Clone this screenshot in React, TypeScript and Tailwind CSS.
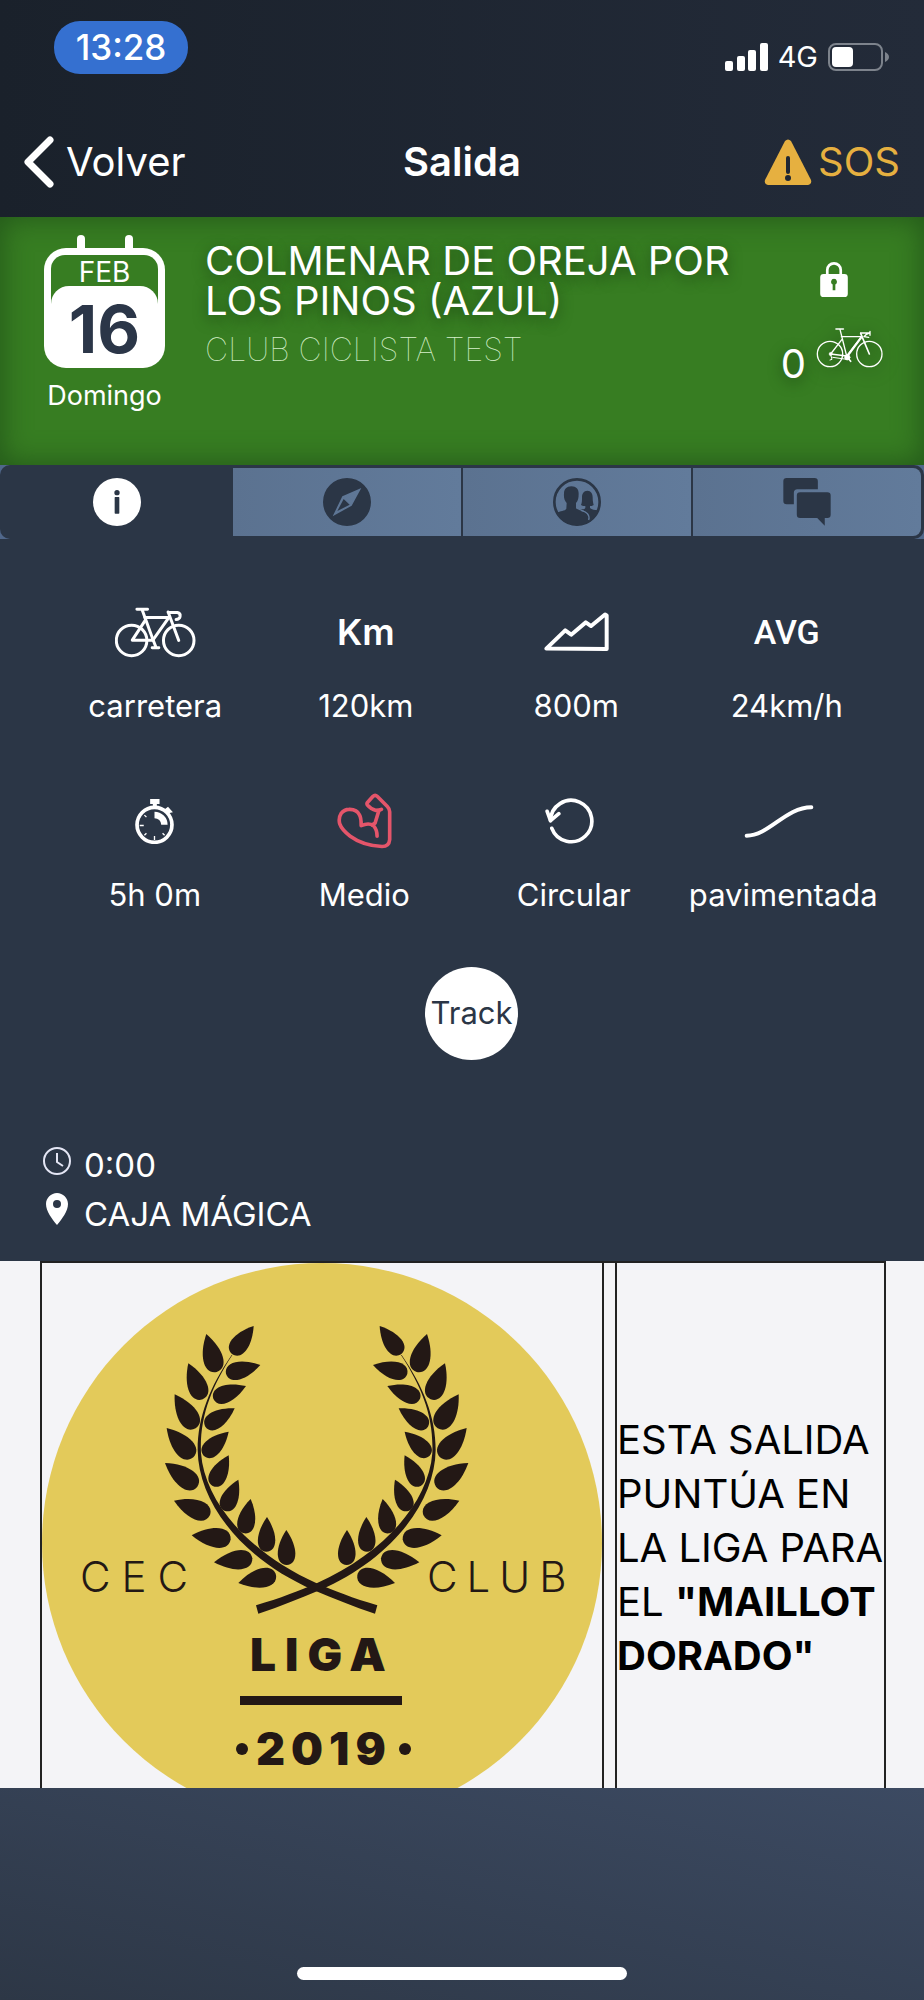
import React, { useState } from "react";

type IconProps = { className?: string };

const INK = "#231815";

// tip x, tip y, base x, base y of each leaf on the left branch
const LEAVES = [
  [671, 228, 606, 312],
  [529, 252, 560, 366],
  [691, 345, 588, 371],
  [475, 340, 518, 448],
  [648, 408, 550, 446],
  [434, 433, 497, 535],
  [614, 475, 526, 530],
  [410, 534, 490, 622],
  [596, 545, 521, 617],
  [405, 639, 502, 710],
  [596, 616, 548, 708],
  [432, 752, 540, 795],
  [625, 689, 583, 782],
  [485, 856, 602, 868],
  [662, 747, 642, 850],
  [552, 937, 667, 925],
  [711, 801, 709, 905],
  [625, 999, 738, 975],
  [769, 840, 770, 945],
];

function Branch() {
  return (
    <g>
      {LEAVES.map(([tx, ty, bx, by]) => {
        const length = Math.hypot(tx - bx, ty - by);
        const angle = (Math.atan2(ty - by, tx - bx) * 180) / Math.PI;
        return (
          <path
            key={`${tx}-${ty}`}
            d="M0 0C2 -33 50 -34 100 0C50 34 2 33 0 0Z"
            transform={`translate(${bx} ${by}) rotate(${angle}) scale(${length / 100})`}
          />
        );
      })}
      <path d="M605 315C540 410 503 500 503 600C505 760 640 930 850 1020C910 1045 970 1070 1035 1091L1042 1066C970 1045 910 1022 860 1000C660 910 525 760 513 610C508 500 545 410 607 315Z" />
    </g>
  );
}

function LeagueBadge() {
  return (
    <svg viewBox="0 0 560 525" className="block w-full" role="img" aria-label="CEC Club Liga 2019">
      <circle cx="280" cy="280" r="280" fill="#e3ca5a" />
      <g transform="translate(-12 -13) scale(0.33333)" fill={INK}>
        <Branch />
        <g transform="translate(1720 0) scale(-1 1)">
          <Branch />
        </g>
      </g>
      <rect x="198" y="433" width="162" height="9" fill={INK} />
      <g fill={INK} className="font-['Inter',sans-serif]">
        <text x="38" y="329" fontSize="42" fontWeight="300" className="tracking-[11px]">CEC</text>
        <text x="385" y="329" fontSize="42" fontWeight="300" className="tracking-[9px]">CLUB</text>
        <text x="208" y="408" fontSize="46" fontWeight="900" className="tracking-[9px]">LIGA</text>
        <text x="214" y="502" fontSize="45" fontWeight="900" className="tracking-[6px]">2019</text>
      </g>
      <circle cx="200" cy="486" r="6" fill={INK} />
      <circle cx="363" cy="486" r="6" fill={INK} />
    </svg>
  );
}

function InfoIcon({ className }: IconProps) {
  return (
    <svg viewBox="0 0 144 144" className={className}>
      <circle cx="72" cy="72" r="72" fill="#fff" />
      <circle cx="72" cy="44" r="8" fill="#2b3646" />
      <rect x="65" y="57" width="14" height="50" rx="2" fill="#2b3646" />
    </svg>
  );
}

function CompassIcon({ className }: IconProps) {
  return (
    <svg viewBox="0 0 144 144" className={className} fill="currentColor" fillRule="evenodd">
      <path d="M72 0A72 72 0 1 1 72 144A72 72 0 1 1 72 0ZM115 30L58 55L29 115L86 83ZM62 63L80 80L43 99Z" />
    </svg>
  );
}

function PeopleIcon({ className }: IconProps) {
  return (
    <svg viewBox="0 0 144 144" className={className}>
      <clipPath id="people-clip">
        <circle cx="72" cy="72" r="70" />
      </clipPath>
      <circle cx="72" cy="72" r="68" fill="none" stroke="currentColor" strokeWidth="8" />
      <g clipPath="url(#people-clip)" fill="currentColor">
        <path d="M55 25C70 25 77 34 77 47C77 60 75 68 69 75L69 91C74 96 86 98 96 103C106 109 110 118 108 128L100 144H20L10 104C22 99 36 99 40 92L41 75C34 67 32 58 33 46C33 34 41 25 55 25Z" />
        <path d="M103 38C114 38 119 47 119 58C119 68 120 75 122 81C118 84 114 84 111 84L111 90C116 95 126 96 134 97L126 128L106 140C113 122 109 108 94 99C89 96 84 95 82 94C88 94 96 94 97 90L97 84C92 84 88 84 84 81C87 75 87 68 87 58C87 47 92 38 103 38Z" />
      </g>
      <path d="M84 97C101 101 111 110 107 126" fill="none" stroke="#627b9b" strokeWidth="4" />
    </svg>
  );
}

function ChatIcon({ className }: IconProps) {
  return (
    <svg viewBox="0 0 144 146" className={className} fill="currentColor">
      <path d="M10 0H95Q105 0 105 10V34H43Q32 34 32 45V80H10Q0 80 0 70V10Q0 0 10 0Z" />
      <path d="M51 43H134Q144 43 144 53V112Q144 122 134 122H126V145L103 122H51Q41 122 41 112V53Q41 43 51 43Z" />
    </svg>
  );
}

function RoadBikeIcon({ className }: IconProps) {
  return (
    <svg viewBox="0 0 204 120" className={className} fill="none" stroke="currentColor" strokeLinecap="round" strokeLinejoin="round">
      <circle cx="42" cy="78" r="38" strokeWidth="4" />
      <circle cx="160" cy="78" r="38" strokeWidth="4" />
      <path d="M60 3H82" strokeWidth="5" />
      <path d="M72 4L92 84M76 26H136L92 84L44 78L78 34" strokeWidth="4" />
      <path d="M134 16L160 78" strokeWidth="5" />
      <path d="M136 28L96 82" strokeWidth="6" />
      <path d="M134 15H160Q150 18 144 26M162 10V22M144 26L158 28" strokeWidth="4" />
      <circle cx="44" cy="78" r="5" fill="currentColor" />
      <path d="M44 80L48 94L42 96M50 88L92 94" strokeWidth="3" />
      <circle cx="94" cy="88" r="8" fill="currentColor" strokeWidth="2" />
      <path d="M94 88L104 100" strokeWidth="5" />
    </svg>
  );
}

function BikeIcon({ className }: IconProps) {
  return (
    <svg viewBox="0 0 244 152" className={className} fill="none" stroke="currentColor" strokeWidth="9" strokeLinecap="round" strokeLinejoin="round">
      <circle cx="50" cy="100" r="46" />
      <circle cx="192" cy="100" r="46" />
      <path d="M66 6H98M82 8L114 96L124 122M112 122H132" />
      <path d="M90 31H162L114 99H52L92 38" />
      <path d="M160 14L192 100M160 16H188Q198 18 196 28Q194 36 184 37" />
    </svg>
  );
}

function SlopeIcon({ className }: IconProps) {
  return (
    <svg viewBox="0 0 196 120" className={className} fill="none" stroke="currentColor" strokeWidth="12" strokeLinejoin="round">
      <path d="M7 110L64 55L82 68L126 31L142 42L184 7L189 10V111Z" />
    </svg>
  );
}

function StopwatchIcon({ className }: IconProps) {
  return (
    <svg viewBox="0 0 116 134" className={className} fill="none" stroke="currentColor">
      <circle cx="58" cy="77" r="52" strokeWidth="11" />
      <path d="M45 0H73V15H65V24H53V15H45Z" fill="currentColor" stroke="none" />
      <path d="M90 32L100 40L109 38L98 26Z" fill="currentColor" strokeWidth="4" />
      <path d="M58 38A39 39 0 0 1 97 77H78A20 20 0 0 0 58 57Z" fill="currentColor" stroke="none" />
      <path d="M14 79H26M58 110V122M28 108L34 102M88 108L82 102M28 48L34 54" strokeWidth="4" />
    </svg>
  );
}

function MuscleIcon({ className }: IconProps) {
  return (
    <svg viewBox="0 0 166 168" className={className} fill="none" stroke="currentColor" strokeWidth="11" strokeLinecap="round" strokeLinejoin="round">
      <path d="M134 49Q128 52 118 52Q102 48 92 36Q89 32 92 28L108 10Q115 3 122 10L152 40Q159 47 159 56V140Q157 161 136 161Q78 158 40 130Q14 110 8 92Q4 74 12 62Q22 49 36 49Q60 48 68 66Q73 74 73 98Q96 88 110 98Q121 110 121 130" />
      <path d="M126 54L115 90Q110 94 106 96" />
    </svg>
  );
}

function CircularIcon({ className }: IconProps) {
  return (
    <svg viewBox="0 0 146 138" className={className} fill="none" stroke="currentColor" strokeWidth="11" strokeLinecap="round" strokeLinejoin="round">
      <path d="M20 91A62 62 0 1 0 16 68" />
      <path d="M6 40L16 68L41 47" />
    </svg>
  );
}

function RoadIcon({ className }: IconProps) {
  return (
    <svg viewBox="0 0 210 100" className={className} fill="none" stroke="currentColor" strokeWidth="12" strokeLinecap="round">
      <path d="M7 93C75 93 125 7 203 7" />
    </svg>
  );
}

function Stat({ icon, label }: { icon: React.ReactNode; label: string }) {
  return (
    <div className="flex flex-col items-center">
      <div className="flex h-[60px] items-center justify-center">{icon}</div>
      <p className="mt-6 text-[31px] leading-10">{label}</p>
    </div>
  );
}

const TABS = [
  { name: "Información", Icon: InfoIcon },
  { name: "Mapa", Icon: CompassIcon },
  { name: "Participantes", Icon: PeopleIcon },
  { name: "Chat", Icon: ChatIcon },
];

export default function App() {
  const [tab, setTab] = useState(0);

  return (
    <div className="flex min-h-screen flex-col bg-[#2b3646] font-['Inter',sans-serif] text-white">
      <header className="bg-linear-to-r from-[#1a212b] to-[#232b39]">
        <div className="flex items-start justify-between pt-[21px] pr-[35px] pl-[54px]">
          <span className="flex h-[53px] w-[134px] items-center justify-center rounded-[26px] bg-[#3570d0] text-[35px] font-medium">
            13:28
          </span>
          <div className="mt-4 flex items-center gap-[10px] text-[29px] leading-10">
            <svg viewBox="0 0 43 28" className="h-7 w-[43px]" fill="currentColor">
              <rect x="0" y="18" width="8" height="10" rx="2" />
              <rect x="12" y="13" width="8" height="15" rx="2" />
              <rect x="23" y="7" width="8" height="21" rx="2" />
              <rect x="35" y="0" width="8" height="28" rx="2" />
            </svg>
            <span>4G</span>
            <svg viewBox="0 0 61 28" className="h-7 w-[61px]">
              <rect x="1" y="1" width="53" height="26" rx="7" fill="none" stroke="#7d838c" strokeWidth="2" />
              <rect x="4" y="4" width="21" height="20" rx="4" fill="#fff" />
              <path d="M57 9Q61 11 61 14Q61 17 57 19Z" fill="#7d838c" />
            </svg>
          </div>
        </div>
        <nav className="grid h-[140px] grid-cols-[1fr_auto_1fr] items-center px-6 pt-[30px] text-[40px]">
          <a href="#volver" className="flex items-center gap-3">
            <svg viewBox="0 0 30 52" className="h-[52px] w-[30px]" fill="none" stroke="currentColor" strokeWidth="7" strokeLinecap="round" strokeLinejoin="round">
              <path d="M26 4L4 26L26 48" />
            </svg>
            Volver
          </a>
          <h1 className="font-semibold">Salida</h1>
          <button type="button" className="flex items-center gap-[6px] justify-self-end text-[#e6b040]">
            <svg viewBox="0 0 48 46" className="h-[46px] w-12">
              <path d="M21 2Q24 -1 27 2L47 41Q48 45 44 46H4Q0 45 1 41Z" fill="currentColor" />
              <path d="M24 19V33" stroke="#1f2733" strokeWidth="4" strokeLinecap="round" />
              <circle cx="24" cy="39" r="3" fill="#1f2733" />
            </svg>
            SOS
          </button>
        </nav>
      </header>

      <section className="flex h-[248px] bg-[#377d22] pr-10 pl-11 shadow-[inset_0_0_28px_2px_#24591a]">
        <div className="flex w-[121px] flex-col items-center pt-[18px]">
          <div className="flex w-full justify-center gap-10">
            <span className="h-[14px] w-2 rounded-t-full bg-white" />
            <span className="h-[14px] w-2 rounded-t-full bg-white" />
          </div>
          <div className="-mt-px h-[120px] w-full rounded-[22px] bg-white p-[7px]">
            <div className="rounded-t-[14px] bg-[#377d22] text-center">
              <p className="h-[31px] text-[28px] leading-[34px]">FEB</p>
              <p className="h-[75px] rounded-t-[18px] bg-white text-[66px] leading-[86px] font-bold text-[#2b3648]">16</p>
            </div>
          </div>
          <p className="mt-2 text-[27px] leading-10">Domingo</p>
        </div>
        <div className="ml-10 flex-1 pt-6">
          <h2 className="text-[40px] leading-10 [text-shadow:0_4px_14px_#1c4a12]">
            COLMENAR DE OREJA POR
            <br />
            LOS PINOS (AZUL)
          </h2>
          <p className="mt-2 text-[32px] leading-[42px] font-thin text-[#d5efca]">CLUB CICLISTA TEST</p>
        </div>
        <div className="flex flex-col items-end pt-[45px]">
          <svg viewBox="0 0 82 104" className="mr-9 h-[35px] w-7" fill="currentColor">
            <path d="M21 38V24A20 20 0 0 1 61 24V38" fill="none" stroke="currentColor" strokeWidth="8" />
            <path fillRule="evenodd" d="M10 36H72Q82 36 82 46V94Q82 104 72 104H10Q0 104 0 94V46Q0 36 10 36ZM41 50A9 9 0 0 0 37 67V84H45V67A9 9 0 0 0 41 50Z" />
          </svg>
          <div className="mt-[31px] flex gap-[10px]">
            <span className="mt-4 text-[40px] leading-10 [text-shadow:0_4px_14px_#1c4a12]">0</span>
            <RoadBikeIcon className="h-10 w-[68px] drop-shadow-[0_3px_8px_#1c4a12]" />
          </div>
        </div>
      </section>

      <div className="bg-[#50678a]">
        <div role="tablist" className="grid grid-cols-4 gap-[2px] overflow-hidden rounded-[10px] bg-[#2b3646] p-[3px]">
          {TABS.map(({ name, Icon }, i) => (
            <button
              key={name}
              type="button"
              role="tab"
              aria-label={name}
              aria-selected={tab === i}
              onClick={() => setTab(i)}
              className={
                tab === i
                  ? "flex h-[68px] items-center justify-center text-white"
                  : "flex h-[68px] items-center justify-center bg-linear-to-r from-[#5b7290] to-[#627b9b] text-[#2b3646] last:rounded-r-[8px]"
              }
            >
              <Icon className="size-12" />
            </button>
          ))}
        </div>
      </div>

      <main className="flex flex-col">
        <div className="grid grid-cols-4 pt-[63px] pr-8 pl-[50px]">
          <Stat icon={<BikeIcon className="h-[51px] w-[81px]" />} label="carretera" />
          <Stat icon={<span className="text-[36px] font-semibold">Km</span>} label="120km" />
          <Stat icon={<SlopeIcon className="h-10 w-[65px]" />} label="800m" />
          <Stat icon={<span className="font-['Roboto',sans-serif] text-[34px] font-medium">AVG</span>} label="24km/h" />
        </div>
        <div className="grid grid-cols-4 pt-[65px] pr-9 pl-[50px]">
          <Stat icon={<StopwatchIcon className="h-[45px] w-[39px]" />} label="5h 0m" />
          <Stat icon={<MuscleIcon className="h-14 w-[55px] text-[#e4556a]" />} label="Medio" />
          <Stat icon={<CircularIcon className="mr-2 h-[46px] w-[49px]" />} label="Circular" />
          <Stat icon={<RoadIcon className="mr-2 h-[33px] w-[70px]" />} label="pavimentada" />
        </div>

        <button
          type="button"
          className="mt-[52px] ml-[19px] size-[93px] self-center rounded-full bg-white text-[31px] text-[#2b3646]"
        >
          Track
        </button>

        <ul className="flex flex-col pt-[81px] pb-[22px] pl-[42px] text-[33px] leading-[49px]">
          <li className="flex gap-3">
            <svg viewBox="0 0 30 30" className="mt-[5px] size-[30px]" fill="none" stroke="#e4e6f5" strokeWidth="2">
              <circle cx="15" cy="15" r="13" />
              <path d="M15 7V16L21 20" />
            </svg>
            0:00
          </li>
          <li className="flex gap-3">
            <svg viewBox="0 0 30 32" className="mt-[3px] h-8 w-[30px]" fill="currentColor">
              <path fillRule="evenodd" d="M15 0C21 0 26 5 26 11C26 18 20 26 15 32C10 26 4 18 4 11C4 5 9 0 15 0ZM15 7A4 4 0 0 0 15 15A4 4 0 0 0 15 7Z" />
            </svg>
            CAJA MÁGICA
          </li>
        </ul>
      </main>

      <section className="bg-[#f4f4f7] pr-[38px] pl-10 text-black">
        <div className="grid grid-cols-[564fr_271fr] gap-x-[11px] border-t-2 border-[#222]">
          <div className="border-x-2 border-[#222]">
            <LeagueBadge />
          </div>
          <div className="flex items-center border-x-2 border-[#222]">
            <p className="pt-11 text-[40px] leading-[54px]">
              ESTA SALIDA PUNTÚA EN LA LIGA PARA EL <b>"MAILLOT DORADO"</b>
            </p>
          </div>
        </div>
      </section>

      <footer className="flex h-[212px] items-end justify-center bg-linear-to-tr from-[#2d3746] to-[#3c4a62] pb-5">
        <span className="h-[13px] w-[330px] rounded-full bg-white" />
      </footer>
    </div>
  );
}
